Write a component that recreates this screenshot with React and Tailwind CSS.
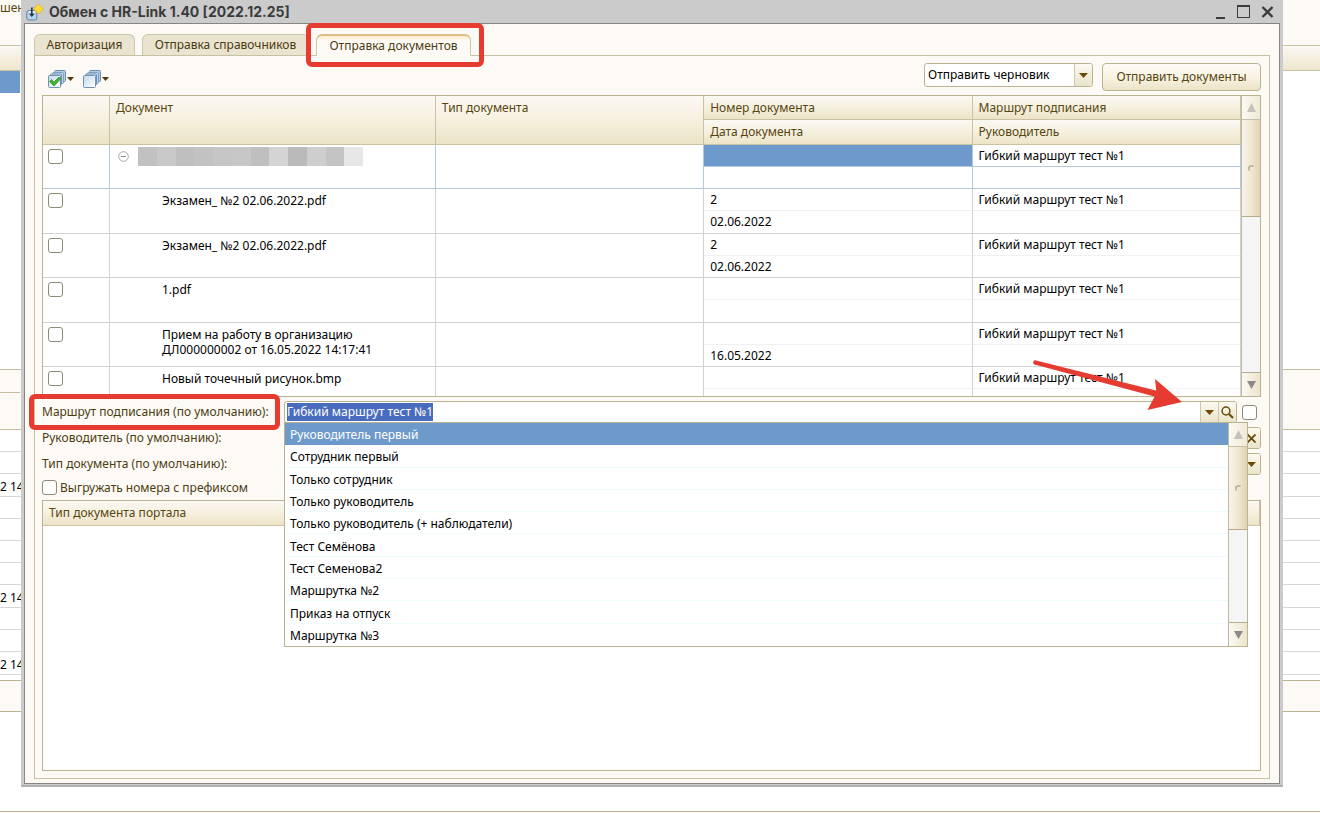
import { useEffect, useRef } from 'react';

const rows = [
  { group: true, doc: [], number: '', date: '' },
  { doc: ['Экзамен_ №2 02.06.2022.pdf'], number: '2', date: '02.06.2022' },
  { doc: ['Экзамен_ №2 02.06.2022.pdf'], number: '2', date: '02.06.2022' },
  { doc: ['1.pdf'], number: '', date: '' },
  {
    doc: ['Прием на работу в организацию', 'ДЛ000000002 от 16.05.2022 14:17:41'],
    number: '',
    date: '16.05.2022',
  },
  { doc: ['Новый точечный рисунок.bmp'], number: '', date: '' },
];

const options = [
  'Руководитель первый',
  'Сотрудник первый',
  'Только сотрудник',
  'Только руководитель',
  'Только руководитель (+ наблюдатели)',
  'Тест Семёнова',
  'Тест Семенова2',
  'Маршрутка №2',
  'Приказ на отпуск',
  'Маршрутка №3',
];

const mosaic = [
  'bg-[#c1c1c1]', 'bg-[#c8c8c8]', 'bg-[#bfbfbf]', 'bg-[#c2c2c2]', 'bg-[#c6c6c6]', 'bg-[#c7c7c7]',
  'bg-[#bfbfbf]', 'bg-[#d4d4d4]', 'bg-[#bababa]', 'bg-[#cecece]', 'bg-[#c4c4c4]', 'bg-[#e7e7e7]',
];

const checkbox =
  'block size-[15px] shrink-0 appearance-none rounded-[3px] border border-[#8d8b78] bg-white checked:bg-[#6e9acb]';
const headCell =
  'border-r border-b border-[#c9c3a4] bg-linear-to-b from-[#fbf8f4] via-[#f5f0df] to-[#ede3c6] px-[6px] pt-px pb-0 text-left align-top font-normal leading-[22px] text-[#57450f]';
const sideButton = 'flex items-center justify-center bg-linear-to-b from-[#fbf9f1] to-[#ebe4cb]';

function Caret() {
  return (
    <svg className="h-[5px] w-[9px] shrink-0" viewBox="0 0 9 5" aria-hidden="true">
      <path d="M0 0h9L4.500 5z" fill="#6b4a08" />
    </svg>
  );
}

function SmallCaret() {
  return (
    <svg className="h-[4px] w-[7px] shrink-0" viewBox="0 0 7 4" aria-hidden="true">
      <path d="M0 0h7L3.500 4z" fill="#4f3a10" />
    </svg>
  );
}

function StackIcon({ checked }) {
  const id = checked ? 'stackChecked' : 'stackPlain';
  return (
    <svg className="h-[18px] w-[18px]" viewBox="0 0 18 18" aria-hidden="true">
      <defs>
        <linearGradient id={id} x1="0" y1="0" x2="1" y2="1">
          <stop offset="0" stopColor="#c3d8ec" />
          <stop offset="1" stopColor="#ffffff" />
        </linearGradient>
      </defs>
      <rect x="6.500" y=".5" width="11" height="11" rx="1" fill="#b4cce4" stroke="#6a8fb4" />
      <rect x="4.500" y="2.500" width="11" height="11" rx="1" fill="#c3d7ea" stroke="#7d9fc0" />
      <rect x="2.500" y="4" width="11" height="11" rx="1" fill="#d3e2f0" stroke="#6a8fb4" />
      <rect x=".5" y="5.500" width="12" height="12" rx="1" fill={`url(#${id})`} stroke="#7393b4" />
      {checked && <path d="M1.500 11.500l2-2 2.500 2.500 5-5 1.500 2-6.500 7z" fill="#3fb52c" stroke="#2a8a1c" strokeWidth=".7" />}
    </svg>
  );
}

function AppIcon() {
  return (
    <svg className="h-[18px] w-[18px]" viewBox="0 0 18 18" aria-hidden="true">
      <rect x=".8" y="7.500" width="10" height="9.500" rx="2" fill="#b9d3ea" stroke="#5b84ad" />
      <rect x="3" y="8" width="6" height="3" fill="#e6f0f8" />
      <path d="M5.800 4.500v7" stroke="#26384d" strokeWidth="1.600" />
      <path d="M2.800 10.500h6L5.800 14z" fill="#26384d" />
      <path d="M6 5h4" stroke="#6e6e6e" strokeDasharray="1 1" />
      <path d="M12.500 1l5 5-5 5-5-5z" fill="#fbdc3a" stroke="#e2ac22" strokeWidth=".8" />
    </svg>
  );
}

function ScrollBar({ thumb }) {
  return (
    <div className="flex w-[19px] shrink-0 flex-col border-l border-[#bfb9a0] bg-[#f6f5f5]">
      <button type="button" aria-label="Вверх" className="flex h-6 items-center justify-center border-b border-[#c6c0a6] bg-linear-to-r from-[#fbf9f3] to-[#f0ead4]">
        <svg className="h-[9px] w-[9px]" viewBox="0 0 9 9" aria-hidden="true"><path d="M4.500 0L9 9H0z" fill="#c3c0bd" /></svg>
      </button>
      <div className={`flex items-center justify-center border-b border-[#b5aa8d] bg-linear-to-r from-[#f8f2ec] via-[#f1e8d2] to-[#e2d4b2] ${thumb}`}>
        <svg className="h-[6px] w-[6px]" viewBox="0 0 6 6" aria-hidden="true"><path d="M1 5.500V3a2 2 0 0 1 2-2h2.500" fill="none" stroke="#b3ab95" strokeWidth="1.500" /></svg>
      </div>
      <div className="flex-1" />
      <button type="button" aria-label="Вниз" className="flex h-6 items-center justify-center border-t border-[#b5aa8d] bg-linear-to-r from-[#fbf9f3] to-[#ece5cc]">
        <svg className="h-[8px] w-[9px]" viewBox="0 0 9 8" aria-hidden="true"><path d="M0 0h9L4.500 8z" fill="#8a8a8a" /></svg>
      </button>
    </div>
  );
}

function Backdrop() {
  return (
    <div className="absolute inset-0 flex flex-col overflow-hidden bg-white">
      <div className="h-[45px] bg-[#fdfaf5] leading-[15px] text-[#57450f]">шен</div>
      <div className="h-[26px] border-y border-[#c9c3a4] bg-linear-to-b from-[#fbf8f4] to-[#efe6cc]" />
      <div className="h-[22px] w-5 bg-[#6e9acb]" />
      <div className="h-[276px]" />
      <div className="h-[61px] border-y border-[#c3bd9d] bg-[#fdfaf5]">
        <div className="h-[23px] w-5 border-b border-[#c3bd9d]" />
      </div>
      <div className="flex h-[245px] flex-col">
        {Array.from({ length: 11 }, (_, i) => (
          <div key={i} className="flex flex-1 items-center border-b border-[#d6d6da] pt-[4px]">
            {[2, 7, 10].includes(i) && <span>2 14</span>}
          </div>
        ))}
      </div>
      <div className="h-[5px]" />
      <div className="h-8 border-y border-[#b9b48e] bg-[#fdfaf5]" />
      <div className="flex-1" />
      <div className="h-[2px] border-t border-[#b9b48e] bg-[#fdfaf5]" />
    </div>
  );
}

function TitleBar() {
  return (
    <header className="flex h-[23px] items-center justify-between pr-[6px] pl-[2px]">
      <div className="flex items-center gap-[5px]">
        <AppIcon />
        <h1 className="font-[Inter,sans-serif] text-[14px] leading-5 font-bold text-[#3b3b3b]">Обмен с HR-Link 1.40 [2022.12.25]</h1>
      </div>
      <div className="flex items-center gap-[11px]">
        <button type="button" aria-label="Свернуть" className="flex h-[14px] w-[10px] items-end">
          <span className="h-[2px] w-[9px] bg-[#3b3b3b]" />
        </button>
        <button type="button" aria-label="Развернуть" className="h-[13px] w-[13px] border border-t-2 border-[#3b3b3b]" />
        <button type="button" aria-label="Закрыть">
          <svg className="h-[12px] w-[13px]" viewBox="0 0 13 12" aria-hidden="true"><path d="M1.500 1l10 10M11.500 1l-10 10" stroke="#3b3b3b" strokeWidth="2.400" /></svg>
        </button>
      </div>
    </header>
  );
}

function Tabs() {
  const tab = 'h-[21px] rounded-t-[6px] border border-b-0 border-[#cdc7ab] px-[9px] leading-[20px] text-[#4b3c12]';
  return (
    <nav className="flex h-[21px] gap-[7px]">
      <button type="button" className={`${tab} w-[101px] bg-[#e9e3cf]`}>Авторизация</button>
      <button type="button" className={`${tab} w-[167px] bg-[#e9e3cf]`}>Отправка справочников</button>
      <div className="relative flex items-start">
        <button type="button" className={`${tab} relative -mb-px h-[22px] w-[155px] border-t-2 border-t-[#d9bf86] bg-linear-to-b from-[#faeccb] to-[#fdfaf5] to-25%`}>
          Отправка документов
        </button>
        <div className="pointer-events-none absolute -top-[11px] -right-[13px] -bottom-[12px] -left-[10px] z-10 rounded-[6px] border-5 border-[#e63b30]" />
      </div>
    </nav>
  );
}

function Toolbar() {
  return (
    <div className="flex items-start justify-between pt-[7px]">
      <div className="flex gap-[9px] pt-[7px] pl-[6px]">
        <button type="button" aria-label="Отметить все" className="flex items-center gap-px"><StackIcon checked /><SmallCaret /></button>
        <button type="button" aria-label="Снять отметки" className="flex items-center gap-px"><StackIcon /><SmallCaret /></button>
      </div>
      <div className="flex items-start gap-[9px]">
        <div className="relative flex h-6 w-[169px]">
          <select aria-label="Режим отправки" className="w-full appearance-none rounded-[3px] border border-[#b9b48e] bg-white pl-[3px] text-black">
            <option>Отправить черновик</option>
          </select>
          <span className={`${sideButton} pointer-events-none absolute inset-y-px right-px w-[18px] rounded-r-[2px] border-l border-[#cdc7ab]`}>
            <Caret />
          </span>
        </div>
        <button type="button" className="h-7 w-[159px] rounded-[4px] border border-[#b9b48e] bg-linear-to-b from-[#fdfbf6] via-[#f8f3e4] to-[#ece3c6] text-[#57450f]">
          Отправить документы
        </button>
      </div>
    </div>
  );
}

function Documents() {
  return (
    <div className="mt-[4px] flex h-[302px] overflow-hidden border border-[#b9b48e] bg-white">
      <div className="min-w-0 flex-1 overflow-hidden">
        <table className="w-full table-fixed border-separate border-spacing-0">
          <colgroup>
            <col className="w-[67px]" />
            <col className="w-[27.2%]" />
            <col className="w-[22.4%]" />
            <col className="w-[22.4%]" />
            <col />
          </colgroup>
          <thead>
            <tr className="h-6">
              <th rowSpan={2} className={headCell} aria-label="Отметка" />
              <th rowSpan={2} className={headCell}>Документ</th>
              <th rowSpan={2} className={headCell}>Тип документа</th>
              <th className={headCell}>Номер документа</th>
              <th className={headCell}>Маршрут подписания</th>
            </tr>
            <tr className="h-[25px]">
              <th className={headCell}>Дата документа</th>
              <th className={headCell}>Руководитель</th>
            </tr>
          </thead>
          {rows.map((row, i) => {
            const line = row.group ? 'border-[#b4c9e0]' : 'border-[#d3d3d3]';
            const inner = row.group ? 'border-b-[#b4c9e0]' : 'border-b-[#f0f0f0]';
            const tall = `border-r border-b ${line} align-top`;
            const small = `border-r border-b ${line} px-[6px] pt-px pb-0 align-top leading-[20px]`;
            return (
              <tbody key={i}>
                <tr className="h-[22px]">
                  <td rowSpan={2} className={`${tall} pt-[4px] pl-[5px]`}>
                    <input type="checkbox" aria-label={row.doc[0] || 'Группа документов'} className={checkbox} />
                  </td>
                  <td rowSpan={2} className={`${tall} pt-[4px] leading-[15px]`}>
                    {row.group ? (
                      <div className="-mt-[2px] flex items-center gap-[9px] pl-[8px]">
                        <svg className="size-[11px]" viewBox="0 0 11 11" aria-hidden="true">
                          <circle cx="5.500" cy="5.500" r="4.800" fill="#fff" stroke="#a9a9a9" />
                          <path d="M3 5.500h5" stroke="#8a8a8a" />
                        </svg>
                        <div className="flex h-[19px] w-[225px]">
                          {mosaic.map((c, k) => <span key={k} className={`flex-1 ${c}`} />)}
                        </div>
                      </div>
                    ) : (
                      <div className="pl-[52px]">
                        {row.doc.map((t) => <span key={t} className="block">{t}</span>)}
                      </div>
                    )}
                  </td>
                  <td rowSpan={2} className={tall} />
                  <td className={`${small} ${inner} ${row.group ? 'bg-[#6e9acb]' : ''}`}>{row.number}</td>
                  <td className={`${small} ${inner}`}>Гибкий маршрут тест №1</td>
                </tr>
                <tr className={i % 2 ? 'h-[23px]' : 'h-[22px]'}>
                  <td className={small}>{row.date}</td>
                  <td className={small} />
                </tr>
              </tbody>
            );
          })}
        </table>
      </div>
      <ScrollBar thumb="h-[97px]" />
    </div>
  );
}

function RouteField() {
  const input = useRef(null);
  useEffect(() => {
    input.current.focus();
    input.current.select();
  }, []);
  return (
    <div className="relative flex h-[22px] flex-1 rounded-[3px] border border-[#b9b48e] bg-white">
      <input
        id="route"
        ref={input}
        defaultValue="Гибкий маршрут тест №1"
        className="min-w-0 flex-1 bg-transparent px-[2px] text-black outline-none selection:bg-[#4a6cbe] selection:text-white"
      />
      <button type="button" aria-label="Открыть список" className={`${sideButton} w-[18px] border-l border-[#cdc7ab]`}><Caret /></button>
      <button type="button" aria-label="Найти" className={`${sideButton} w-[18px] rounded-r-[2px] border-l border-[#cdc7ab]`}>
        <svg className="size-[13px]" viewBox="0 0 13 13" aria-hidden="true">
          <circle cx="5" cy="5" r="3.900" fill="none" stroke="#6b4a08" strokeWidth="1.500" />
          <path d="M8 8l4 4" stroke="#6b4a08" strokeWidth="2.200" />
        </svg>
      </button>
      <div className="absolute top-full -right-[12px] -left-px z-20 flex h-[225px] border border-[#b9b48e] bg-white">
        <ul role="listbox" aria-label="Маршруты" className="flex flex-1 flex-col">
          {options.map((o, i) => (
            <li
              key={o}
              role="option"
              aria-selected={i === 0}
              className={`flex flex-1 items-center border-b px-[5px] pt-[3px] ${i === 0 ? 'border-[#6e9acb] bg-[#6e9acb] text-white' : 'border-[#effbfd] text-black last:border-white'}`}
            >
              {o}
            </li>
          ))}
        </ul>
        <ScrollBar thumb="h-[83px]" />
      </div>
      <svg className="pointer-events-none absolute -top-[47px] right-[50px] z-30 h-[58px] w-[156px]" viewBox="0 0 156 58" aria-hidden="true">
        <path d="M6 5.500L128 36l-1.500 6L4.500 9.500a2 2 0 0 1 1.500-4z" fill="#e63b30" />
        <path d="M152 47L125 24l1.500 14-9 17z" fill="#e63b30" />
      </svg>
    </div>
  );
}

function Defaults() {
  const label = 'w-[242px] shrink-0 text-[#4b3c12]';
  const field = 'flex h-[22px] flex-1 rounded-[3px] border border-[#b9b48e] bg-white';
  return (
    <div className="mt-[4px] flex flex-col gap-[4px]">
      <div className="flex h-[22px] items-center">
        <div className={`${label} relative`}>
          <label htmlFor="route">Маршрут подписания (по умолчанию):</label>
          <div className="pointer-events-none absolute -top-[9px] right-[4px] -bottom-[9px] -left-[13px] z-30 rounded-[6px] border-5 border-[#e63b30]" />
        </div>
        <RouteField />
        <input type="checkbox" aria-label="Маршрут по умолчанию" className={`${checkbox} mr-[4px] ml-[5px]`} />
      </div>
      <div className="flex h-[22px] items-center">
        <label htmlFor="manager" className={label}>Руководитель (по умолчанию):</label>
        <div className={field}>
          <input id="manager" className="min-w-0 flex-1 bg-transparent px-[2px] outline-none" />
          <button type="button" aria-label="Очистить" className={`${sideButton} w-[18px] rounded-r-[2px] border-l border-[#cdc7ab]`}>
            <svg className="size-[9px]" viewBox="0 0 9 9" aria-hidden="true"><path d="M.5.5l8 8M8.500.5l-8 8" stroke="#6b4a08" strokeWidth="1.800" /></svg>
          </button>
        </div>
      </div>
      <div className="flex h-[22px] items-center">
        <label htmlFor="doctype" className={label}>Тип документа (по умолчанию):</label>
        <div className={field}>
          <input id="doctype" className="min-w-0 flex-1 bg-transparent px-[2px] outline-none" />
          <button type="button" aria-label="Выбрать тип" className={`${sideButton} w-[18px] rounded-r-[2px] border-l border-[#cdc7ab]`}><Caret /></button>
        </div>
      </div>
      <label className="flex h-[17px] items-center gap-[3px] text-[#4b3c12]">
        <input type="checkbox" className={checkbox} />
        Выгружать номера с префиксом
      </label>
    </div>
  );
}

function PortalTypes() {
  return (
    <div className="mt-[4px] mb-[7px] flex-1 border border-[#b9b48e] bg-white">
      <table className="w-full border-separate border-spacing-0">
        <thead>
          <tr className="h-[25px]"><th className={headCell}>Тип документа портала</th></tr>
        </thead>
      </table>
    </div>
  );
}

export default function App() {
  return (
    <div className="relative flex min-h-screen flex-col overflow-hidden bg-white font-['Noto_Sans','Open_Sans',sans-serif] text-[12px] text-black">
      <Backdrop />
      <main className="relative mr-[37px] mb-[26px] ml-[21px] flex flex-1 flex-col border-b-2 border-[#b0b0b0] bg-[#cbcbcb] px-[3px] pb-px">
        <TitleBar />
        <div className="flex flex-1 flex-col border border-[#858585] bg-[#fdfaf5] px-[9px] pt-[10px] pb-[4px]">
          <Tabs />
          <section className="flex flex-1 flex-col border border-[#c6c1a0] pr-[8px] pl-[7px]">
            <Toolbar />
            <Documents />
            <Defaults />
            <PortalTypes />
          </section>
        </div>
      </main>
    </div>
  );
}
